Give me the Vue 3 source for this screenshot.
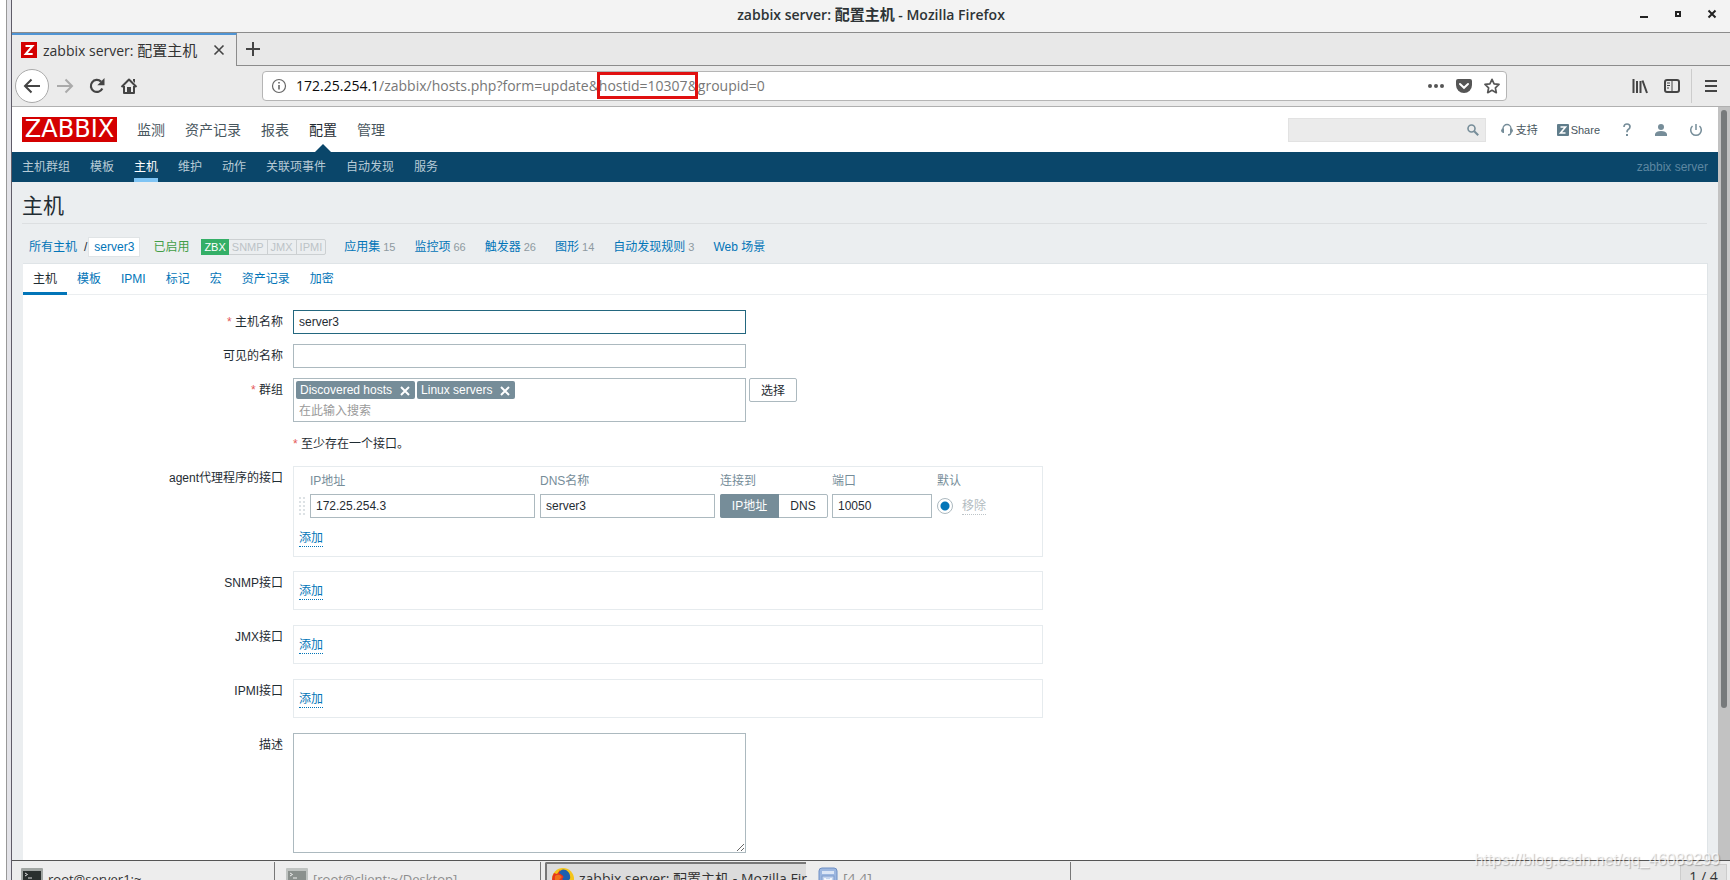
<script setup>
import { ref } from 'vue'

const mainMenu = ['监测', '资产记录', '报表', '配置', '管理']
const subMenu = ['主机群组', '模板', '主机', '维护', '动作', '关联项事件', '自动发现', '服务']
const badges = ['ZBX', 'SNMP', 'JMX', 'IPMI']
const entities = [
  { name: '应用集', count: 15 },
  { name: '监控项', count: 66 },
  { name: '触发器', count: 26 },
  { name: '图形', count: 14 },
  { name: '自动发现规则', count: 3 },
  { name: 'Web 场景' },
]
const tabs = ['主机', '模板', 'IPMI', '标记', '宏', '资产记录', '加密']
const activeTab = ref('主机')
const hostName = ref('server3')
const visibleName = ref('')
const groups = ref(['Discovered hosts', 'Linux servers'])
const agent = ref({ ip: '172.25.254.3', dns: 'server3', port: '10050', use: 'ip' })
const otherInterfaces = ['SNMP接口', 'JMX接口', 'IPMI接口']
const description = ref('')
</script>

<template>
  <div class="screen">
    <div class="edge"></div>
    <div class="desktop">
      <header class="titlebar">
        <span class="window-title">zabbix server: <span class="cjk">配置主机</span> - Mozilla Firefox</span>
        <div class="window-buttons">
          <button aria-label="最小化"><svg width="10" height="10"><path d="M1 8h8" stroke="#222" stroke-width="2" /></svg></button>
          <button aria-label="最大化"><svg width="10" height="10"><rect x="3" y="3" width="4" height="4" fill="none" stroke="#222" stroke-width="2" /></svg></button>
          <button aria-label="关闭"><svg width="10" height="10"><path d="M1.500 1.500l7 7M8.500 1.500l-7 7" stroke="#222" stroke-width="2" /></svg></button>
        </div>
      </header>

      <div class="tabstrip">
        <div class="browser-tab">
          <svg width="16" height="16" viewBox="0 0 16 16"><path fill="#d40000" d="M0 0h16v16H0z" /><path d="M4.500 4h7L4.700 12h7" fill="none" stroke="#fff" stroke-width="2" /></svg>
          <span class="tab-title">zabbix server: <span class="cjk">配置主机</span></span>
          <button aria-label="关闭标签页"><svg width="12" height="12"><path d="M1.500 1.500l9 9M10.500 1.500l-9 9" stroke="#444" stroke-width="1.600" /></svg></button>
        </div>
        <button class="new-tab" aria-label="新建标签页"><svg width="14" height="14"><path d="M7 0v14M0 7h14" stroke="#444" stroke-width="2" /></svg></button>
      </div>

      <div class="toolbar">
        <div class="nav-buttons">
          <button class="back" aria-label="后退"><svg width="18" height="16" viewBox="0 0 18 16"><path d="M17 8H2M8.500 1.500L2 8l6.500 6.500" fill="none" stroke="#444" stroke-width="2" /></svg></button>
          <button aria-label="前进"><svg width="18" height="16" viewBox="0 0 18 16"><path d="M1 8h15M9.500 1.500L16 8l-6.500 6.500" fill="none" stroke="#aaa" stroke-width="2" /></svg></button>
          <button aria-label="刷新"><svg width="18" height="16" viewBox="0 0 18 16"><path d="M14.300 10.500A6 6 0 1 1 13 3.600" fill="none" stroke="#444" stroke-width="2.200" /><path d="M16.500 0v7.200H9.300z" fill="#444" /></svg></button>
          <button aria-label="主页"><svg width="18" height="16" viewBox="0 0 18 16"><path d="M1.500 9L9 1.500 16.500 9M4 8v7h10V8" fill="none" stroke="#444" stroke-width="2" stroke-linejoin="round" /><path d="M7 15V9h4v6z" fill="#444" /><path d="M13 1h2v4l-2-2z" fill="#444" /></svg></button>
        </div>
        <div class="urlbar">
          <svg width="16" height="16" viewBox="0 0 16 16"><circle cx="8" cy="8" r="6.500" fill="none" stroke="#666" stroke-width="1.200" /><path d="M8 7v4.500M8 4v1.600" stroke="#666" stroke-width="1.600" /></svg>
          <div class="address" role="textbox" aria-label="地址"><span class="domain">172.25.254.1</span>/zabbix/hosts.php?form=update&amp;<span class="marked">hostid=10307&amp;</span>groupid=0</div>
          <button aria-label="页面操作"><svg width="16" height="16" viewBox="0 0 16 16"><g fill="#555"><circle cx="2" cy="8" r="2" /><circle cx="8" cy="8" r="2" /><circle cx="14" cy="8" r="2" /></g></svg></button>
          <button aria-label="Pocket"><svg width="16" height="16" viewBox="0 0 16 16"><path d="M2 1h12q2 0 2 2v4a8 8 0 0 1-16 0V3q0-2 2-2z" fill="#555" /><path d="M4 6l4 3.800L12 6" fill="none" stroke="#fff" stroke-width="2" stroke-linecap="round" /></svg></button>
          <button aria-label="书签"><svg width="16" height="16" viewBox="0 0 16 16"><path d="M8 1.300l2.100 4.500 4.900.6-3.600 3.400.9 4.900L8 12.300l-4.300 2.400.9-4.900L1 6.400l4.900-.6z" fill="none" stroke="#555" stroke-width="1.700" stroke-linejoin="round" /></svg></button>
        </div>
        <div class="tool-buttons">
          <button aria-label="我的足迹"><svg width="16" height="16" viewBox="0 0 16 16"><path d="M1.500 1v14M5 3v12M8.500 3v12M10.500 2.500L15 15" stroke="#444" stroke-width="2" /></svg></button>
          <button aria-label="侧栏"><svg width="16" height="16" viewBox="0 0 16 16"><rect x="1" y="2" width="14" height="12" rx="2" fill="none" stroke="#444" stroke-width="2" /><path d="M8 2v12" stroke="#444" /><path d="M3 5h3M3 7.500h3M3 10h2" stroke="#444" /></svg></button>
          <i class="divider"></i>
          <button aria-label="菜单"><svg width="12" height="14"><path d="M0 2h12M0 7h12M0 12h12" stroke="#444" stroke-width="2" /></svg></button>
        </div>
      </div>

      <div class="viewport">
        <main class="page">
          <div class="top">
            <a href="#" class="logo">ZABBIX</a>
            <nav class="menu">
              <a v-for="m in mainMenu" :key="m" href="#" :class="{ on: m === '配置' }">{{ m }}</a>
            </nav>
            <div class="search">
              <input type="text" aria-label="搜索" />
              <button aria-label="搜索"><svg width="12" height="12" viewBox="0 0 12 12"><circle cx="4.500" cy="4.500" r="3.500" fill="none" stroke="#768d99" stroke-width="1.600" /><path d="M7.200 7.200l4 4" stroke="#768d99" stroke-width="2" /></svg></button>
            </div>
            <a href="#" class="util support"><svg width="12" height="13" viewBox="0 0 12 13"><path d="M2 9V5.500a4 4 0 0 1 8 0V9q0 3-3 3" fill="none" stroke="#768d99" stroke-width="1.300" /><path d="M1 5.500h2V10H2Q0 9 0 7.500zM11 5.500H9V10h1q2-1 2-2.500z" fill="#768d99" /></svg>支持</a>
            <a href="#" class="util share"><svg width="12" height="12" viewBox="0 0 12 12"><rect width="12" height="12" rx="1" fill="#607d8b" /><path d="M3.500 3h5l-5 6h5" fill="none" stroke="#fff" stroke-width="1.600" /></svg>Share</a>
            <a href="#" class="util glyph" aria-label="帮助"><svg width="12" height="14" viewBox="0 0 12 14"><path d="M3 4q0-3 3-3t3 2.700Q9 5.300 7 6.700 6 7.500 6 9.200" fill="none" stroke="#768d99" stroke-width="1.700" /><path d="M5 11h2v2H5z" fill="#768d99" /></svg></a>
            <a href="#" class="util glyph" aria-label="个人资料"><svg width="12" height="12" viewBox="0 0 12 12"><circle cx="6" cy="3" r="3" fill="#768d99" /><path d="M0 12V10q1-3 6-3t6 3v2z" fill="#768d99" /></svg></a>
            <a href="#" class="util glyph" aria-label="登出"><svg width="14" height="14" viewBox="0 0 14 14"><path d="M3.500 3a5.300 5.300 0 1 0 7 0M7 1v6" fill="none" stroke="#768d99" stroke-width="1.500" /></svg></a>
          </div>
          <nav class="submenu">
            <a v-for="m in subMenu" :key="m" href="#" :class="{ on: m === '主机' }">{{ m }}</a>
            <span class="server-name">zabbix server</span>
          </nav>

          <h1>主机</h1>

          <div class="objects">
            <a href="#" class="all-hosts">所有主机</a>
            <span class="slash">/</span>
            <a href="#" class="current">server3</a>
            <span class="enabled">已启用</span>
            <span class="badges"><span v-for="b in badges" :key="b" :class="{ ok: b === 'ZBX' }">{{ b }}</span></span>
            <span v-for="e in entities" :key="e.name" class="entity"><a href="#">{{ e.name }}</a><sup v-if="e.count">{{ e.count }}</sup></span>
          </div>

          <form class="card" @submit.prevent>
            <div class="tabs" role="tablist">
              <button v-for="t in tabs" :key="t" type="button" role="tab" :aria-selected="activeTab === t" :class="{ on: activeTab === t }" @click="activeTab = t">{{ t }}</button>
            </div>
            <div class="fields">
              <label for="host" class="required">主机名称</label>
              <input id="host" v-model="hostName" type="text" class="wide focused" />

              <label for="visible">可见的名称</label>
              <input id="visible" v-model="visibleName" type="text" class="wide" />

              <label for="groups" class="required">群组</label>
              <div class="group-row">
                <div class="multiselect wide">
                  <div class="chips">
                    <span v-for="g in groups" :key="g" class="chip">{{ g }}<button type="button" :aria-label="'移除 ' + g" @click="groups = groups.filter((x) => x !== g)"><svg width="10" height="10"><path d="M1 1l8 8M9 1L1 9" stroke="#fff" stroke-width="2" /></svg></button></span>
                  </div>
                  <input id="groups" type="text" placeholder="在此输入搜索" />
                </div>
                <button type="button" class="select">选择</button>
              </div>

              <p class="required note">至少存在一个接口。</p>

              <span class="label">agent代理程序的接口</span>
              <div class="box agent">
                <table>
                  <thead>
                    <tr><th class="c-drag"></th><th class="c-ip">IP地址</th><th class="c-dns">DNS名称</th><th class="c-use">连接到</th><th class="c-port">端口</th><th class="c-radio">默认</th><th></th></tr>
                  </thead>
                  <tbody>
                    <tr>
                      <td><i class="drag"></i></td>
                      <td><input v-model="agent.ip" type="text" aria-label="IP地址" /></td>
                      <td><input v-model="agent.dns" type="text" aria-label="DNS名称" /></td>
                      <td>
                        <div class="segmented">
                          <button type="button" :class="{ on: agent.use === 'ip' }" @click="agent.use = 'ip'">IP地址</button>
                          <button type="button" :class="{ on: agent.use === 'dns' }" @click="agent.use = 'dns'">DNS</button>
                        </div>
                      </td>
                      <td><input v-model="agent.port" type="text" aria-label="端口" /></td>
                      <td><input type="radio" name="default" checked aria-label="默认" /></td>
                      <td><button type="button" class="dotted off" disabled>移除</button></td>
                    </tr>
                  </tbody>
                </table>
                <button type="button" class="dotted">添加</button>
              </div>

              <template v-for="i in otherInterfaces" :key="i">
                <span class="label">{{ i }}</span>
                <div class="box"><button type="button" class="dotted">添加</button></div>
              </template>

              <label for="description">描述</label>
              <textarea id="description" v-model="description" class="wide"></textarea>
            </div>
          </form>
        </main>
        <div class="scrollbar"><div class="thumb"></div></div>
      </div>

      <footer class="taskbar">
        <button class="task first">
          <svg width="22" height="22" viewBox="0 0 22 22"><rect width="22" height="22" rx="1" fill="#a0a5a2" /><rect x="2" y="3" width="18" height="17" fill="#2a302e" /><path d="M4 5l2.500 1.500L4 8M7 10h4" fill="none" stroke="#ddd" /></svg>
          root@server1:~
        </button>
        <button class="task second dim">
          <svg width="22" height="22" viewBox="0 0 22 22"><rect width="22" height="22" rx="1" fill="#bfc3c1" /><rect x="2" y="3" width="18" height="17" fill="#8a908d" /><path d="M4 5l2.500 1.500L4 8M7 10h4" fill="none" stroke="#eee" /></svg>
          [root@client:~/Desktop]
        </button>
        <button class="task current-task">
          <svg width="22" height="22" viewBox="0 0 22 22"><circle cx="11" cy="11" r="11" fill="#f5c518" /><path d="M11 22A11 11 0 0 1 2 5l3 1 3-4 3 5 6 3v10z" fill="#e6351c" /><path d="M7 5q2-5 7-3 5 3 4 9-4 4-8 0 3-2 0-4z" fill="#1c5fae" /><path d="M3 8q4-3 7 1l-3 3q2 4 8 3-3 5-8 3-5-3-4-10z" fill="#f0701a" /></svg>
          zabbix server: 配置主机 - Mozilla Fir…
        </button>
        <button class="task last dim">
          <svg width="20" height="24" viewBox="0 0 20 24"><rect x="1" y="1" width="18" height="23" rx="3" fill="#9db7e0" stroke="#6e8fc4" /><rect x="4" y="4" width="12" height="3" fill="#dce6f6" /><rect x="4" y="9" width="12" height="9" fill="#c4d4ee" stroke="#7f9ccc" /><path d="M7 11v2h6v-2" fill="none" stroke="#fff" stroke-width="1.500" /></svg>
          [4.4]
        </button>
        <span class="pager">1 / 4</span>
      </footer>
      <span class="watermark">https://blog.csdn.net/qq_46089299</span>
    </div>
  </div>
</template>

<style>
html,
body {
  height: 100%;
  overflow: hidden;
}
#app {
  height: 100%;
}
</style>

<style scoped>
* {
  box-sizing: border-box;
}
.screen {
  display: flex;
  height: 100vh;
  overflow: hidden;
  background: #fff;
  color: #1f2c33;
  font: 12px/16px "Liberation Sans", "Noto Sans CJK SC", sans-serif;
}
button,
input,
textarea {
  margin: 0;
  padding: 0;
  border: 0;
  background: none;
  color: inherit;
  font: inherit;
  outline: 0;
}
a {
  color: #0275b8;
  text-decoration: none;
}
svg {
  display: block;
  flex: none;
}
.edge {
  flex: none;
  width: 7px;
  border-right: 1px solid #999;
}
.desktop {
  position: relative;
  display: flex;
  flex-direction: column;
  flex: 1;
  min-width: 0;
  border-left: 1px solid #5f5c68;
  margin-left: 4px;
  outline: 4px solid #e3e3e8;
}
.titlebar,
.tabstrip,
.toolbar,
.taskbar {
  font-family: "Open Sans", "Noto Sans CJK SC", sans-serif;
  font-size: 14px;
}
.cjk {
  font-size: 15px;
}
.titlebar {
  position: relative;
  flex: none;
  display: flex;
  align-items: center;
  justify-content: center;
  height: 33px;
  padding-bottom: 4px;
  border-bottom: 1px solid #8c8c8c;
  background: #f3f3f3;
  color: #2e3436;
  font-weight: 600;
}
.window-buttons {
  position: absolute;
  right: 13px;
  top: 9px;
  display: flex;
  gap: 24px;
}
.tabstrip {
  flex: none;
  display: flex;
  height: 33px;
  background: #e8e8e8;
}
.browser-tab {
  display: flex;
  align-items: center;
  width: 225px;
  padding: 0 11px 1px 9px;
  gap: 6px;
  border-top: 2px solid #4f94d4;
  border-right: 1px solid #8c8c8c;
  background: #ebebeb;
  color: #333;
}
.tab-title {
  flex: 1;
  white-space: nowrap;
}
.new-tab {
  flex: 1;
  padding-left: 9px;
  border-bottom: 1px solid #8c8c8c;
}
.toolbar {
  flex: none;
  display: flex;
  align-items: center;
  height: 41px;
  border-bottom: 1px solid #b0b0b0;
  background: #ebebeb;
}
.nav-buttons {
  display: flex;
  align-items: center;
  width: 250px;
  padding-left: 3px;
}
.nav-buttons button {
  display: flex;
  align-items: center;
  justify-content: center;
  width: 32px;
  height: 34px;
}
.nav-buttons .back {
  width: 34px;
  border: 1px solid #aaa;
  border-radius: 50%;
  background: #fff;
}
.urlbar {
  display: flex;
  align-items: center;
  flex: 1;
  height: 30px;
  padding: 0 6px 0 8px;
  gap: 12px;
  border: 1px solid #b5b5b5;
  border-radius: 4px;
  background: #fff;
}
.address {
  flex: 1;
  margin-left: -3px;
  color: #777;
  white-space: nowrap;
}
.domain {
  color: #0c0c0d;
}
.marked {
  position: relative;
}
.marked::after {
  content: "";
  position: absolute;
  inset: -4px 0 -4px -2px;
  border: 3px solid #e01010;
}
.tool-buttons {
  display: flex;
  align-items: center;
  justify-content: flex-end;
  gap: 16px;
  width: 223px;
  padding-right: 13px;
}
.divider {
  width: 1px;
  height: 34px;
  margin: 0 -3px 0 -5px;
  background: #ccc;
}
.viewport {
  flex: 1;
  display: flex;
  min-height: 0;
}
.page {
  flex: 1;
  min-width: 0;
  overflow: hidden;
  background: #ebeef0;
}
.scrollbar {
  flex: none;
  width: 12px;
  padding: 3px;
  background: #c2c2c2;
}
.thumb {
  width: 6px;
  height: 80%;
  border-radius: 3px;
  background: #777a7b;
}
.top {
  display: flex;
  align-items: center;
  height: 45px;
  padding: 0 15px 0 10px;
  background: #fff;
}
.logo {
  width: 95px;
  height: 25px;
  background: #d40000;
  color: #fff;
  font: 24px/25px "DejaVu Sans", sans-serif;
  text-align: center;
}
.menu {
  display: flex;
  align-self: stretch;
  flex: 1;
  gap: 20px;
  margin-left: 20px;
}
.menu a {
  position: relative;
  color: #48565e;
  font-size: 14px;
  line-height: 47px;
}
.menu .on {
  color: #1f2c33;
}
.menu .on::after {
  content: "";
  position: absolute;
  left: 6px;
  bottom: 0;
  border: 8px solid transparent;
  border-top: 0;
  border-bottom-color: #0a466a;
}
.search {
  display: flex;
  align-items: center;
  width: 198px;
  height: 24px;
  margin-right: 15px;
  padding-right: 6px;
  border: 1px solid #e2e2e2;
  background: #ebebeb;
}
.search input {
  flex: 1;
  min-width: 0;
}
.util {
  display: flex;
  align-items: center;
  color: #48565e;
  font-size: 11px;
}
.support {
  gap: 3px;
}
.share {
  gap: 2px;
  margin: 0 21px 0 19px;
}
.glyph + .glyph {
  margin-left: 22px;
}
.submenu {
  display: flex;
  gap: 20px;
  height: 30px;
  padding: 0 10px;
  background: #0a466a;
  line-height: 31px;
}
.submenu a {
  color: #b8cbd6;
}
.submenu .on {
  border-bottom: 4px solid #7fc4f4;
  color: #fff;
}
.server-name {
  margin-left: auto;
  color: #5d87a1;
}
h1 {
  height: 42px;
  margin: 0 11px 0 10px;
  border-bottom: 1px solid #dcdfe1;
  color: #1f2c33;
  font-size: 21px;
  font-weight: 400;
  line-height: 48px;
}
.objects {
  display: flex;
  align-items: center;
  height: 39px;
  padding: 6px 0 0 17px;
  line-height: 20px;
}
.slash {
  margin: 0 1px 0 7px;
}
.current {
  padding: 0 5px;
  border: 1px solid #e0e4e6;
  background: #fff;
  line-height: 18px;
}
.enabled {
  margin-left: 13px;
  color: #429e47;
}
.badges {
  display: flex;
  margin: 0 18px 0 12px;
  border: 1px solid #ccd0d2;
  border-radius: 2px;
  color: #bcc3c7;
  font-size: 11px;
  line-height: 14px;
}
.badges span {
  padding: 0 3px;
}
.badges span + span + span {
  border-left: 1px solid #ccd0d2;
}
.badges .ok {
  margin: -1px 0 -1px -1px;
  background: #34af67;
  color: #fff;
  line-height: 16px;
}
.entity {
  margin-right: 19px;
}
.entity sup {
  margin-left: 3px;
  color: #8e9aa1;
  font-size: 11px;
  vertical-align: baseline;
}
.card {
  min-height: 100vh;
  margin: 0 10px 0 11px;
  border: 1px solid #dfe4e7;
  border-left: 0;
  background: #fff;
}
.tabs {
  display: flex;
  height: 31px;
  border-bottom: 1px solid #ebeef0;
}
.tabs button {
  height: 31px;
  padding: 2px 10px 0;
  border-bottom: 3px solid transparent;
  color: #0275b8;
}
.tabs .on {
  border-bottom-color: #0275b8;
  color: #1f2c33;
}
.fields {
  display: grid;
  grid-template-columns: 260px 1fr;
  justify-items: start;
  gap: 10px;
  padding-top: 15px;
}
.fields > label,
.label {
  justify-self: end;
  line-height: 25px;
  height: 24px;
}
.required::before {
  content: "* ";
  color: #e45959;
}
.wide {
  width: 453px;
}
input.wide,
td input[type="text"],
textarea {
  height: 24px;
  padding: 0 5px;
  border: 1px solid #acb9bf;
  background: #fff;
}
input.focused {
  border-color: #23677f;
}
textarea {
  height: 120px;
  resize: both;
}
.group-row {
  display: flex;
  align-items: flex-start;
  gap: 3px;
}
.multiselect {
  height: 44px;
  padding: 2px;
  border: 1px solid #acb9bf;
}
.chips {
  display: flex;
  gap: 2px;
}
.chip {
  display: flex;
  align-items: center;
  gap: 8px;
  height: 18px;
  padding: 0 5px 0 4px;
  border-radius: 2px;
  background: #768d99;
  color: #fff;
}
.chip button {
  padding-top: 2px;
}
.multiselect input {
  display: block;
  width: 100%;
  height: 22px;
  padding: 1px 0 0 3px;
}
.multiselect input::placeholder {
  color: #9a9a9a;
}
.select {
  width: 48px;
  height: 24px;
  padding-top: 1px;
  border: 1px solid #acb9bf;
  border-radius: 2px;
}
.note {
  grid-column: 2;
  height: 24px;
  margin: 0;
  line-height: 25px;
}
.box {
  width: 750px;
  height: 39px;
  margin-bottom: 5px;
  padding: 10px 5px 0;
  border: 1px solid #e6ebee;
}
.agent {
  height: 91px;
  margin-bottom: 4px;
  padding-top: 4px;
}
.dotted {
  height: 18px;
  border-bottom: 1px dotted #0275b8;
  color: #0275b8;
}
.off {
  border-color: #bcc3c7;
  color: #b3bbc0;
}
.agent > .dotted {
  margin-top: 11px;
}
table {
  width: 100%;
  table-layout: fixed;
  border-collapse: collapse;
}
th {
  height: 23px;
  padding: 0 0 4px;
  color: #768d99;
  font-weight: 400;
  text-align: left;
}
td {
  height: 24px;
  padding: 0;
}
.c-drag {
  width: 11px;
}
.c-ip {
  width: 230px;
}
.c-dns {
  width: 180px;
}
.c-use {
  width: 112px;
}
.c-port {
  width: 105px;
}
.c-radio {
  width: 25px;
}
td input[type="text"] {
  display: block;
  width: calc(100% - 5px);
}
.drag {
  display: block;
  width: 7px;
  height: 19px;
  background: radial-gradient(circle at 1px 1px, #dde2e5 1px, transparent 1px) 0 0 / 4px 4px;
}
.segmented {
  display: flex;
  width: 108px;
  height: 24px;
  border: 1px solid #acb9bf;
  border-radius: 2px;
}
.segmented button {
  flex: 1;
}
.segmented .on {
  flex: none;
  width: 59px;
  margin: -1px 0 -1px -1px;
  border-radius: 2px 0 0 2px;
  background: #768d99;
  color: #fff;
}
input[type="radio"] {
  display: block;
  width: 16px;
  height: 16px;
  appearance: none;
  border: 1px solid #acb9bf;
  border-radius: 50%;
  background: radial-gradient(circle, #0275b8 4px, transparent 5px);
}
.taskbar {
  flex: none;
  display: flex;
  height: 20px;
  overflow: hidden;
  border-top: 1px solid #555;
  background: #ededed;
}
.task {
  display: flex;
  align-items: center;
  gap: 5px;
  height: 34px;
  margin-top: 1px;
  padding-left: 9px;
  border-right: 1px solid #777;
  color: #333;
  white-space: nowrap;
}
.first {
  width: 263px;
  font-size: 13px;
}
.second {
  width: 266px;
  padding-left: 11px;
  font-size: 13px;
}
.current-task {
  width: 261px;
  margin-left: 4px;
  padding-left: 5px;
  border: 2px solid #777;
  border-right: 0;
  border-radius: 2px 0 0 0;
  background: #dcdcdc;
}
.last {
  width: 265px;
  padding-left: 12px;
}
.dim {
  color: #8c8c8c;
}
.pager {
  width: 47px;
  height: 36px;
  margin: 3px 3px 0 auto;
  border: 1px solid #ccc;
  background: #e0e0e0;
  color: #333;
  line-height: 24px;
  text-align: center;
}
.watermark {
  position: absolute;
  right: 10px;
  bottom: 12px;
  color: rgba(255, 255, 255, 0.7);
  font-size: 16px;
  text-shadow: 1px 1px 1px rgba(0, 0, 0, 0.25);
}
</style>
